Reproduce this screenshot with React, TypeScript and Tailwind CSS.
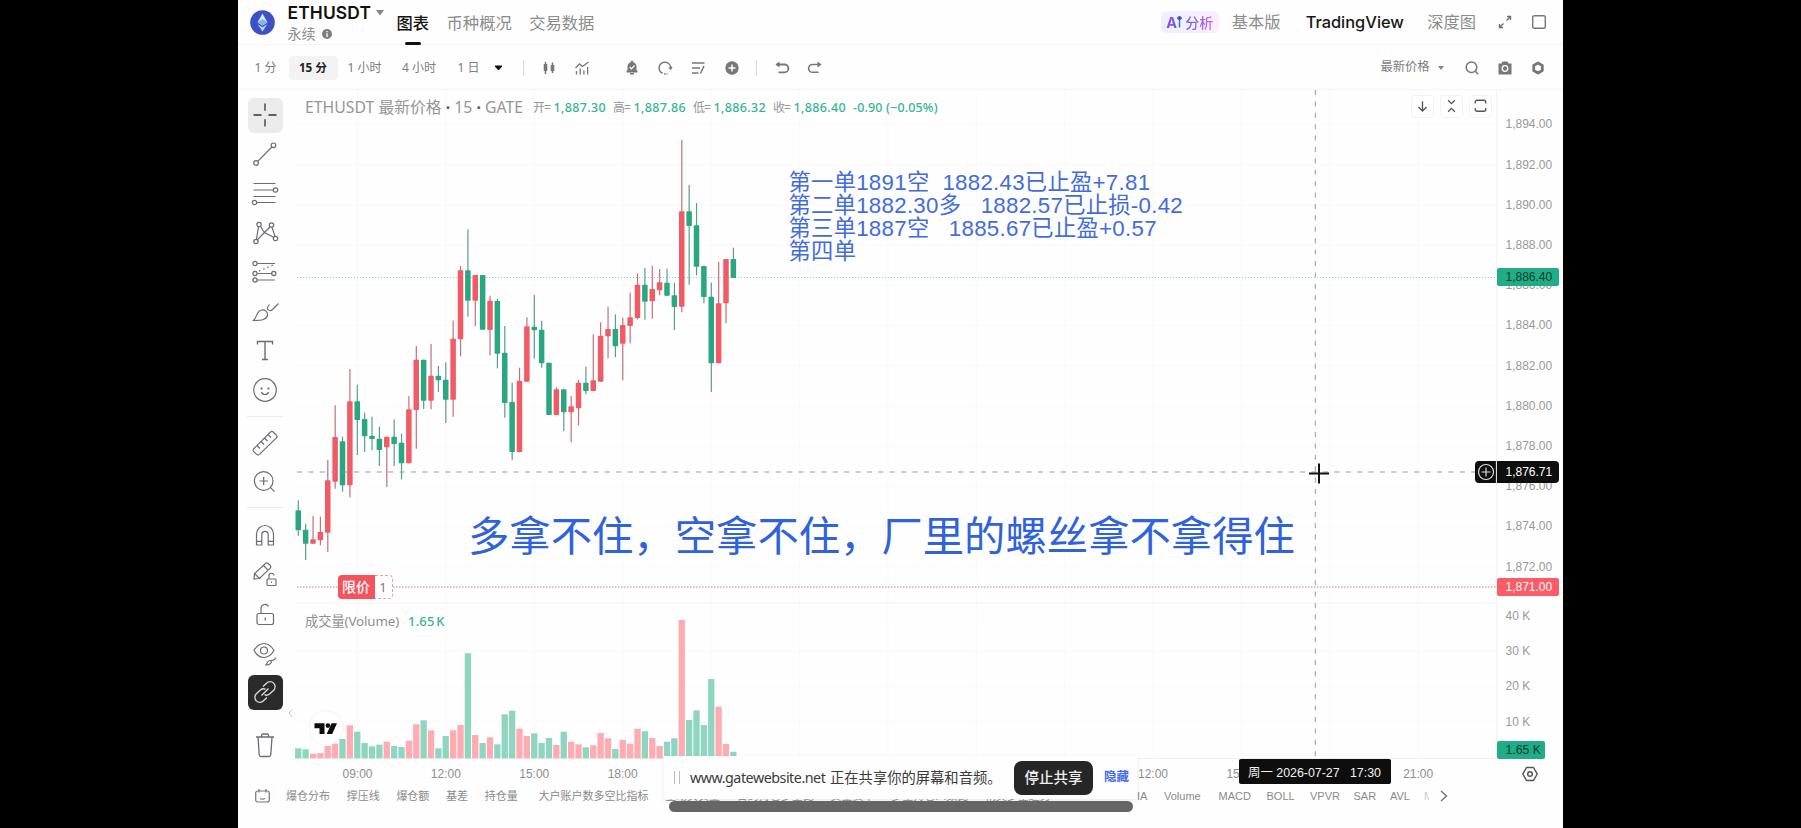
import React from 'react';

type Candle = ['g' | 'r', number, number, number, number, number];

// color, high, body top, body bottom, low, volume top
const candles: Candle[] = [
  ['g', 500.3, 510.3, 530.3, 535.7, 748.3],
  ['g', 523.7, 529.7, 543.7, 560, 749.3],
  ['r', 516, 539.3, 543.7, 543.7, 753.7],
  ['r', 516.7, 532, 540.3, 545.3, 753],
  ['r', 460, 480.3, 532.7, 552, 746],
  ['r', 405.3, 437, 481.7, 488.7, 743.7],
  ['g', 436.7, 441.3, 485.3, 491.7, 739],
  ['r', 369, 401.3, 485.3, 497.3, 725.3],
  ['g', 384.7, 401.3, 420, 455, 731.7],
  ['g', 412.7, 419, 436.3, 452, 743],
  ['g', 416.7, 435.7, 439, 450, 746.3],
  ['g', 426.7, 438.7, 450, 466, 744.7],
  ['r', 436.7, 436.7, 447.3, 487, 741.7],
  ['g', 419.3, 436.7, 444, 466, 746],
  ['g', 433.7, 442.7, 463.3, 479.3, 747],
  ['r', 396, 409.3, 463.3, 463.3, 740.7],
  ['r', 346, 359.7, 410, 448.7, 724.3],
  ['g', 359.7, 359.7, 400.7, 409, 720.3],
  ['r', 344, 375.7, 400.7, 409.3, 730.3],
  ['g', 366, 375.7, 380.3, 392, 748.3],
  ['g', 362.3, 379.7, 399.7, 423, 736],
  ['r', 320.7, 338.7, 399.7, 416.7, 730.3],
  ['r', 266, 270.3, 339.3, 356.3, 725],
  ['g', 229.3, 270.3, 300.7, 316.7, 653.3],
  ['r', 275, 275, 300.7, 326, 735],
  ['g', 275, 275, 329.7, 329.7, 743],
  ['r', 295.7, 300.7, 330, 355.3, 737.3],
  ['g', 298.7, 301, 353.7, 368.3, 744.3],
  ['g', 326, 352.7, 403, 417.7, 714.3],
  ['g', 382.7, 402, 452, 460, 710.7],
  ['r', 367.7, 380.7, 452, 452.3, 728.7],
  ['r', 317.3, 326.3, 381.7, 381.7, 736],
  ['g', 295, 326.7, 330.3, 358.7, 733.3],
  ['g', 320.7, 329.7, 363.3, 367.7, 743],
  ['g', 362.7, 362.7, 415, 415, 738],
  ['r', 387.3, 389.3, 415, 415, 745],
  ['g', 389.3, 389.3, 412.3, 431, 731.7],
  ['r', 396, 406.3, 412.3, 442.3, 741.7],
  ['r', 380, 382.7, 408.3, 425.3, 744.3],
  ['g', 366.7, 382.7, 391, 394.3, 747.3],
  ['r', 334.3, 380.3, 391, 391, 745.3],
  ['r', 322.3, 335.7, 381.7, 381.7, 733],
  ['r', 306.7, 329, 336.3, 358.3, 738.3],
  ['g', 314.3, 329, 346.3, 357.3, 749],
  ['r', 317.7, 325, 343.7, 380.3, 740],
  ['r', 292.7, 317.3, 326, 343.3, 743.7],
  ['r', 273.3, 284.7, 318, 319.3, 728.7],
  ['g', 268, 284.7, 301.7, 319.7, 731.3],
  ['r', 265.7, 289, 301.3, 318.7, 738],
  ['r', 269, 282.3, 290.3, 295.3, 746],
  ['g', 268.7, 282.7, 295.7, 295.7, 741.7],
  ['g', 282.7, 295.3, 307, 330, 738.3],
  ['r', 140, 211.3, 306.7, 312.3, 620],
  ['g', 185, 211.3, 226, 284.7, 720],
  ['g', 203, 225.3, 266.7, 275.3, 710.3],
  ['g', 265.7, 266, 297, 303.3, 725],
  ['g', 282.7, 296.7, 363.3, 392, 679],
  ['r', 262, 303.3, 363.3, 363.3, 706.7],
  ['r', 259, 259, 303.3, 323.3, 744],
  ['g', 247.7, 259, 278, 278, 751.7],
];

const prices = ['1,894.00', '1,892.00', '1,890.00', '1,888.00', '1,886.00', '1,884.00', '1,882.00', '1,880.00', '1,878.00', '1,876.00', '1,874.00', '1,872.00'];
const volumes = ['40 K', '30 K', '20 K', '10 K'];
// blank slots sit behind the share bar
const times = ['09:00', '12:00', '15:00', '18:00', '', '', '', '', '', '12:00', '15:00', '', '21:00'];

const Tool: React.FC<{ children: React.ReactNode; box?: string }> = ({ children, box = '' }) => (
  <div className="flex h-[39.3px] w-[54px] shrink-0 items-center justify-center">
    <div className={`flex h-[35px] w-[35px] items-center justify-center rounded-md text-[#6c6c72] ${box}`}>
      <svg width="30" height="30" viewBox="0 0 30 30" fill="none" stroke="currentColor" strokeWidth="1.2">
        {children}
      </svg>
    </div>
  </div>
);

const Icon: React.FC<{ children: React.ReactNode; className?: string }> = ({ children, className = '' }) => (
  <div className={`flex w-[33.3px] shrink-0 items-center justify-center text-[#777] ${className}`}>
    <svg width="18" height="18" viewBox="0 0 18 18" fill="none" stroke="currentColor" strokeWidth="1.5">
      {children}
    </svg>
  </div>
);

const Header = () => (
  <header className="flex h-[45px] items-center border-b border-[#f3f3f3] text-[16.3px] text-[#8c8c8c]">
    <svg className="ml-3 shrink-0" width="25" height="25" viewBox="0 0 25 25">
      <circle cx="12.5" cy="12.5" r="12.3" fill="#3f4fc6" />
      <path d="M12.500 3.500 7.500 12.400l5 3 5-3z" fill="#d3ecfb" />
      <path d="M12.500 9 7.500 12.400l5 3 5-3z" fill="#86b4ee" />
      <path d="m7.800 14.200 4.700 7.300 4.700-7.300-4.700 3z" fill="#b5dcf8" />
    </svg>
    <div className="ml-[12.500px] w-[109px] shrink-0 pt-[3px]">
      <div className="flex h-[20px] items-center font-['Inter'] text-[17.400px] font-semibold leading-5 text-[#111]">
        <span className="tracking-[0.150px]">ETHUSDT</span>
        <svg className="ml-[5px]" width="8" height="6" viewBox="0 0 8 6"><path d="M0 0h8L4 5.5z" fill="#858585" /></svg>
      </div>
      <div className="flex h-[21px] items-center text-[14px] leading-[21px]">
        永续
        <svg className="ml-[6px]" width="10" height="10" viewBox="0 0 10 10">
          <circle cx="5" cy="5" r="5" fill="#7d7d7d" />
          <path d="M5 2v1.2M5 4.2V8" stroke="#fff" strokeWidth="1.3" />
        </svg>
      </div>
    </div>
    <nav className="flex h-full items-stretch gap-[17.5px] leading-[46px] whitespace-nowrap">
      <div className="relative font-medium text-[#151515]">
        图表
        <div className="absolute bottom-[-1px] left-2 h-[3px] w-4 rounded-sm bg-[#111]" />
      </div>
      <div>币种概况</div>
      <div>交易数据</div>
    </nav>
    <div className="ml-auto flex items-center pt-[1px] whitespace-nowrap">
      <div className="mr-[13px] flex h-[22px] w-[58px] items-center justify-center rounded-md bg-gradient-to-r from-[#eef0ff] to-[#fbeefd]">
        <span className="bg-gradient-to-r from-[#a03fe0] to-[#5864e8] bg-clip-text font-['Inter'] text-[14.500px] font-bold text-transparent">A</span>
        <svg className="mr-[3px]" width="5" height="12" viewBox="0 0 5 12"><path d="M2.500 4.500V11.500M2.500 .3l1.800 1.800-1.800 1.800L.7 2.100z" stroke="#4867e8" strokeWidth="1.500" /></svg>
        <span className="bg-gradient-to-r from-[#6a60e6] to-[#c167df] bg-clip-text text-[14px] font-medium text-transparent">分析</span>
      </div>
      <span>基本版</span>
      <span className="ml-[25px] w-[96.500px] font-['Inter'] text-[16.400px] font-medium text-[#161616]">TradingView</span>
      <span className="ml-[25px]">深度图</span>
      <svg className="ml-[22px]" width="14" height="14" viewBox="0 0 14 14" fill="none" stroke="#707070" strokeWidth="1.400">
        <path d="M9 1.500h3.500V5M12.500 1.500 8.500 5.500M5 12.500H1.500V9M1.500 12.500l4-4" />
      </svg>
      <svg className="mr-[17px] ml-[20px]" width="14" height="14" viewBox="0 0 14 14" fill="none" stroke="#777" strokeWidth="1.400">
        <rect x="0.700" y="0.700" width="12.600" height="12.600" rx="1.500" />
      </svg>
    </div>
  </header>
);

const Toolbar = () => (
  <div className="flex h-[45px] items-center border-b border-[#f5f5f5] pt-[1px] text-[12px] whitespace-nowrap text-[#7d7d7d]">
    <div className="ml-[7.500px] w-[40px] text-center">1 分</div>
    <div className="ml-[3px] flex h-6 w-[49px] items-center justify-center rounded bg-[#f3f3f3] text-[11.700px] font-bold text-[#222]">15 分</div>
    <div className="w-[54px] text-center">1 小时</div>
    <div className="w-[55px] text-center">4 小时</div>
    <div className="w-[44px] text-center">1 日</div>
    <svg className="ml-[3.500px] shrink-0" width="9" height="6" viewBox="0 0 9 6"><path d="M1 1h7L4.500 5z" fill="#111" stroke="#111" strokeLinejoin="round" /></svg>
    <div className="ml-[20px] h-4 w-px bg-[#ddd]" />
    <Icon className="ml-[8.500px]">
      <path d="M5.500 3v12M12.500 3.500v10.500" />
      <rect x="3.700" y="5" width="3.600" height="7" fill="currentColor" stroke="none" />
      <rect x="10.700" y="6" width="3.600" height="6" fill="currentColor" stroke="none" />
    </Icon>
    <Icon className="mr-[16px]">
      <path d="m2.500 9 4-4 3 2.500L15.500 3M3.500 12v3.500M7.200 9.500v6M10.900 11.500v4M14.600 8v7.500" strokeWidth="1.300" />
    </Icon>
    <Icon>
      <path d="M3.500 13.500V12l1-1V7.500a4.500 4.500 0 0 1 9 0V11l1 1v1.500zM7 15.500h4V14H7z" fill="currentColor" stroke="none" />
      <path d="M8 2.500h2" />
      <path d="m6.700 8 1.700 1.800L11.500 6.500" stroke="#fff" strokeWidth="1.200" />
    </Icon>
    <Icon>
      <path d="M6.500 14.300A5.800 5.800 0 1 1 14.700 9" />
      <path d="m12.800 8.300 2 2 1.200-2.500" strokeWidth="1.200" />
      <path d="M8 14.900h3.500" strokeDasharray="1.500 1" />
    </Icon>
    <Icon>
      <path d="M3 4h12.500M3 9h8M3 14h6.500M15 7l-3.500 7.500" />
    </Icon>
    <Icon>
      <circle cx="9" cy="9" r="6.700" fill="currentColor" stroke="none" />
      <path d="M9 5.500v7M5.500 9h7" stroke="#fff" />
    </Icon>
    <div className="mx-[8px] h-4 w-px bg-[#ddd]" />
    <Icon className="text-[#222]">
      <path d="M3.500 5.500h8a3.700 3.700 0 0 1 0 7.800H5.500" strokeWidth="1.800" />
      <path d="M6.500 2.500v6L2.500 5.500z" fill="currentColor" stroke="none" />
    </Icon>
    <Icon>
      <path d="M14.500 5.500h-8a3.700 3.700 0 0 0 0 7.800h6" strokeWidth="1.600" />
      <path d="M11.500 2.500v6l4-3z" fill="currentColor" stroke="none" />
    </Icon>
    <div className="ml-auto flex items-center">
      <span className="text-[12.300px]">最新价格</span>
      <svg className="mr-[11.500px] ml-[8px]" width="6" height="4" viewBox="0 0 6 4"><path d="M0 0h6L3 4z" fill="#888" /></svg>
      <Icon>
        <circle cx="8.500" cy="8.300" r="5.300" />
        <path d="m12.300 12.300 3 3" />
      </Icon>
      <Icon>
        <path d="M2.500 4.500h3l1-2h5l1 2h3v11h-13z" fill="currentColor" stroke="none" />
        <circle cx="9" cy="9.500" r="2.800" stroke="#fff" strokeWidth="1.300" />
      </Icon>
      <Icon className="mr-[8px]">
        <path d="m9 4 4.300 2.500v5L9 14l-4.300-2.500v-5z" strokeWidth="2.800" strokeLinejoin="round" />
      </Icon>
    </div>
  </div>
);

const DrawingTools = () => (
  <aside className="flex w-[57px] shrink-0 flex-col pt-[5.500px]">
    <Tool box="bg-[#ebebeb]">
      <path d="M15 3.500v7.200M15 19.300v7.200M3.500 15h8M18.500 15h8" stroke="#333" strokeWidth="1.300" />
    </Tool>
    <Tool>
      <circle cx="23.500" cy="6.300" r="2.300" />
      <circle cx="6" cy="24" r="2.300" />
      <path d="M7.700 22.300 21.900 8" />
    </Tool>
    <Tool>
      <path d="M3.500 4.500h22M3.500 11h20M3.500 17.500h22M6.500 23.500h19" />
      <circle cx="25.500" cy="11" r="2.200" />
      <circle cx="4.500" cy="23.500" r="2.200" />
    </Tool>
    <Tool>
      <circle cx="9" cy="6.500" r="2.200" />
      <circle cx="21.500" cy="7" r="2.200" />
      <circle cx="6" cy="23.500" r="2.200" />
      <circle cx="25.500" cy="20.500" r="2.200" />
      <path d="M6.500 21.300 8.500 8.700M10.400 8.200l4 6.300 9.300 4.700M25 18.400 22 9.100M20.200 8.800l-5.800 5.700-6.800 7.200" />
    </Tool>
    <Tool>
      <path d="M7.200 6.500H25M7.500 16.500h14.500M7.200 23H25" />
      <path d="m9 14 14-6" strokeDasharray="1.500 3" />
      <circle cx="5" cy="6.500" r="2.100" />
      <circle cx="5" cy="16.500" r="2.100" />
      <circle cx="23.800" cy="16.500" r="2.100" />
      <circle cx="5" cy="23" r="2.100" />
    </Tool>
    <Tool>
      <path d="M3.500 23.500c3.500-3 3-9.500 8-10.500 3.500-.8 6.500 2 6 5.200-.8 4.500-5.500 5.300-14 5.300z" />
      <path d="M18 9.500c-2 2.500 1.500 5.500 4.500 3L28.500 6.500M18 9.500l1.500-2" />
    </Tool>
    <Tool>
      <path d="M7.500 8.500V5.500h15v3M15 5.500v18M12 23.500h6" strokeWidth="1.400" />
    </Tool>
    <Tool>
      <circle cx="15" cy="15" r="11.300" />
      <path d="M11.500 17c.8 3.300 6.200 3.300 7 0" />
      <path d="M11.500 12.500v2M18.500 12.500v2" strokeWidth="1.800" />
    </Tool>
    <div className="mt-[6px] mb-[6px] ml-[9px] h-px w-[36px] shrink-0 bg-[#ececec]" />
    <Tool>
      <path d="m3.500 21 17-17a2 2 0 0 1 2.700 0l3.200 3.200a2 2 0 0 1 0 2.700l-17 16.500a2 2 0 0 1-2.700 0l-3.200-3a2 2 0 0 1 0-2.400zM7 17.500l3 3M11 13.500l3 3M14.500 10l3 3M18 6.500l3 3" />
    </Tool>
    <Tool>
      <circle cx="13.700" cy="14" r="9.300" />
      <path d="m20.500 20.700 4 4M9.500 14h8.400M13.700 9.800v8.400" />
    </Tool>
    <div className="mt-[6px] mb-[7px] ml-[9px] h-px w-[36px] shrink-0 bg-[#ececec]" />
    <Tool>
      <path d="M6.500 25V14a8.500 8.500 0 0 1 17 0v11h-5.300V14.500a3.200 3.200 0 0 0-6.400 0V25zM6.500 21.300h5.300M18.200 21.300h5.300" />
    </Tool>
    <Tool>
      <path d="m4 20 .5-5.500L15.500 4.500a2 2 0 0 1 2.700 0l2 2a2 2 0 0 1 0 2.700L9.500 19.500zM13.500 6.500l4.500 4.700M4.500 14.500l5 5" />
      <rect x="17" y="20" width="9" height="6.500" rx="1" />
      <path d="M19 20v-3a2.500 2.500 0 0 1 5-.5M21.500 22.500v1.500" />
    </Tool>
    <Tool>
      <rect x="7" y="14.500" width="16.500" height="11" rx="2" />
      <path d="M11 14.500V9a4 4 0 0 1 7.500-1.500M15.200 18.500v3" />
    </Tool>
    <Tool>
      <path d="M4 12.500C7 7.500 10.500 5.500 14 5.500s7 2 10 7c-3 5-6.500 7-10 7s-7-2-10-7z" />
      <circle cx="14" cy="12.500" r="3.500" />
      <path d="M15.500 27c2-1 2-4.500 4.500-4.500S22 27 15.500 27zM21.500 22c1 1 2.500 0 4.500-2" />
    </Tool>
    <Tool box="bg-[#2b2b2b] !text-[#ddd]">
      <path d="m13 9.500 3.500-3.300a5 5 0 0 1 7.200 7L19.500 17a4.500 4.500 0 0 1-5 .7M17 20.500l-3.500 3.300a5 5 0 0 1-7.200-7L10.500 13a4.500 4.500 0 0 1 5-.7M11.500 18.500l7-7" strokeWidth="1.300" />
    </Tool>
    <div className="h-[14px] shrink-0" />
    <Tool>
      <path d="M6 6h18M8 6l1.200 17.700a2 2 0 0 0 2 1.800h7.600a2 2 0 0 0 2-1.800L22 6M11.500 6V4.500a1.500 1.500 0 0 1 1.500-1.500h4A1.500 1.500 0 0 1 18.500 4.500V6" strokeWidth="1.300" />
    </Tool>
  </aside>
);

const Chart = () => (
  <svg className="block" width="1202" height="669" viewBox="295 90 1202 669">
    {prices.map((p, i) => (
      <path key={p} d={`M296 ${124.5 + i * 40.2}H1497`} stroke="#fafafa" />
    ))}
    {volumes.map((v, i) => (
      <path key={v} d={`M296 ${616 + i * 35.3}H1497`} stroke="#fafafa" />
    ))}
    {times.map((t, i) => (
      <path key={i} d={`M${357.5 + i * 88.4} 90V758`} stroke="#f9f9f9" />
    ))}
    <path d="M296 603H1497M1496.500 90V758" stroke="#f3f3f3" />
    <path d="M296 758.500H1497" stroke="#f0f0f0" />
    {candles.map(([c, , , , , v], i) => (
      <rect key={i} x={295.1 + i * 7.375} y={v} width="6.300" height={758.3 - v} fill={c === 'g' ? '#8fd5c0' : '#ffabb2'} />
    ))}
    <path d="M297 277.500H1497" stroke="#8fd6c4" strokeDasharray="1 2" />
    <path d="M297 587H1497" stroke="#cf7d86" strokeDasharray="1.500 1.500" />
    {candles.map(([c, high, top, bottom, low], i) => (
      <g key={i}>
        <rect x={297.7 + i * 7.375} y={high} width="1.200" height={low - high} fill={c === 'g' ? '#55a08a' : '#c56f7a'} />
        <rect x={295.5 + i * 7.375} y={top} width="5.500" height={bottom - top} rx="0.800" fill={c === 'g' ? '#2aa780' : '#f05b66'} />
      </g>
    ))}
    <path d="M297 472H1497M1315.300 90V758" stroke="#999" strokeDasharray="5 6.400" />
    <path d="M1309 473.500h20M1319 463.500v20" stroke="#111" strokeWidth="2" />
    <circle cx="326" cy="728" r="17" fill="#fff" stroke="#f3f3f3" />
    <path d="M314.500 723.300h10v10.800h-5v-5.800h-5zM331.500 723.300h5.500l-4.800 10.800h-5.500z" fill="#0c0c0c" />
    <circle cx="327.900" cy="725.600" r="2.300" fill="#0c0c0c" />
  </svg>
);

const Quote = ({ name, value }: { name: string; value: string }) => (
  <span className="flex w-[80px] items-center">
    <span className="w-[20.500px] tracking-[-1px]">{name}=</span>
    <span className="font-['Noto_Sans'] text-[12.500px] font-medium tracking-[0.350px] text-[#35b495]">{value}</span>
  </span>
);

const Overlays = () => (
  <>
    <div className="absolute top-[8px] left-[10px] flex h-[20px] items-center text-[12px] whitespace-nowrap text-[#969696]">
      <span className="w-[228px] text-[15.800px]">ETHUSDT 最新价格 <b className="text-[#555]">·</b> 15 <b className="text-[#555]">·</b> GATE</span>
      <Quote name="开" value="1,887.30" />
      <Quote name="高" value="1,887.86" />
      <Quote name="低" value="1,886.32" />
      <Quote name="收" value="1,886.40" />
      <span className="font-['Noto_Sans'] text-[12.500px] font-medium tracking-[0.150px] text-[#35b495]">-0.90 (−0.05%)</span>
    </div>

    <div className="absolute top-[4.500px] left-[1115.500px] flex gap-[6px]">
      {['M11 6v10M6.800 12l4.200 4.200 4.200-4.200', 'M7.500 5l3.500 3.500L14.500 5M7.500 17l3.500-3.500 3.500 3.500', 'M5.500 8.500V7a2 2 0 0 1 2-2h7a2 2 0 0 1 2 2v1.500M16.500 13v1.500a2 2 0 0 1-2 2h-7a2 2 0 0 1-2-2V13'].map((d) => (
        <div key={d} className="flex h-[23px] w-[23px] items-center justify-center rounded border border-[#f3f3f3] bg-white">
          <svg width="22" height="22" viewBox="0 0 22 22" fill="none" stroke="#555" strokeWidth="1.400"><path d={d} /></svg>
        </div>
      ))}
    </div>

    {/* Trade notes */}
    <div className="absolute top-[82px] left-[493.500px] font-['Liberation_Sans','Noto_Sans_CJK_SC',sans-serif] text-[22.300px] leading-[22.900px] tracking-[0.270px] whitespace-pre text-[#426cdc]">
      <div>第一单1891空  1882.43已止盈+7.81</div>
      <div>第二单1882.30多   1882.57已止损-0.42</div>
      <div>第三单1887空   1885.67已止盈+0.57</div>
      <div>第四单</div>
    </div>
    <div className="absolute top-[416px] left-[173px] text-[41.350px] leading-[58px] whitespace-nowrap text-[#2f62dc]">
      多拿不住，空拿不住，厂里的螺丝拿不拿得住
    </div>

    {/* Limit order tag */}
    <div className="absolute top-[484.500px] left-[42.500px] flex h-[24.500px] text-[14px] leading-[24px]">
      <div className="w-[37px] rounded-l-sm bg-[#f5535e] text-center font-medium text-white">限价</div>
      <div className="w-[18px] rounded-r-sm border border-l-0 border-dashed border-[#d9a5aa] bg-white text-center text-[13px] leading-[22px] text-[#8d7377]">1</div>
    </div>

    <div className="absolute top-[521px] left-[10px] flex h-[22px] items-center text-[13.300px] whitespace-nowrap text-[#8e8e8e]">
      <span className="w-[103px] tracking-[-0.100px]">成交量(Volume)</span>
      <span className="font-['Noto_Sans'] text-[13px] font-medium tracking-[0.200px] text-[#35b495] [word-spacing:-2px]">1.65 K</span>
    </div>
    <div className="absolute top-[613px] left-[-10px] flex h-5 w-2.5 items-center justify-center text-[#bbb]">
      <svg width="5" height="8" viewBox="0 0 5 8" fill="none" stroke="currentColor"><path d="M4 .5 1 4l3 3.500" /></svg>
    </div>
  </>
);

const PriceAxis = () => (
  <div className="relative w-[66px] shrink-0 pt-[14.400px] font-['Liberation_Sans',sans-serif] text-[12px] text-[#999]">
    {prices.map((p) => (
      <div key={p} className="flex h-[40.200px] items-center pl-[8.500px]">{p}</div>
    ))}
    <div className="h-[11.500px]" />
    {volumes.map((v) => (
      <div key={v} className="flex h-[35.300px] items-center pl-[8.500px]">{v}</div>
    ))}
    <div className="absolute top-[178px] left-0 flex h-[18px] w-[62px] items-center rounded-xs bg-[#1fad87] pl-[8.500px] text-[#0b3d30]">1,886.40</div>
    <div className="absolute top-[371px] left-[-22px] flex h-[22px] w-[84px] items-center rounded-sm bg-[#0e0e0e] text-white">
      <svg width="22" height="22" viewBox="0 0 22 22" fill="none" stroke="#ddd" strokeWidth="1.200">
        <circle cx="11" cy="11" r="7.500" />
        <path d="M11 6.500v9M6.500 11h9M21.500 0v22" />
      </svg>
      <span className="ml-[8.500px]">1,876.71</span>
    </div>
    <div className="absolute top-[488px] left-0 flex h-[18px] w-[62px] items-center rounded-xs bg-[#fb5c66] pl-[8.500px] text-white">1,871.00</div>
    <div className="absolute top-[651px] left-0 flex h-[18px] w-[48px] items-center rounded-xs bg-[#1fad87] pl-[8.500px] text-[12.300px] text-[#0b3d30]">1.65 K</div>
  </div>
);

const TimeAxis = () => (
  <div className="relative flex h-[26px] shrink-0 items-center pt-[3px] pl-[75.300px] font-['Liberation_Sans','Noto_Sans_CJK_SC',sans-serif] text-[12px] text-[#8e8e8e]">
    {times.map((t, i) => (
      <div key={i} className="w-[88.400px] shrink-0 text-center">{t}</div>
    ))}
    <svg className="ml-[60px] shrink-0" width="16" height="16" viewBox="0 0 16 16" fill="none" stroke="#555" strokeWidth="1.500">
      <path d="M4.500 1.500h7L15.200 8l-3.700 6.500h-7L.8 8z" strokeLinejoin="round" />
      <circle cx="8" cy="8" r="2.300" />
    </svg>
    <div className="absolute top-[-0.500px] left-[1000.500px] flex h-[25px] w-[152px] items-center justify-center rounded-xs bg-[#0e0e0e] pt-[5px] text-[12.400px] whitespace-pre text-[#f2f2f2]">
      周一 2026-07-27   17:30
    </div>
  </div>
);

const Indicators = () => (
  <div className="flex h-[22px] shrink-0 items-center text-[11px] whitespace-nowrap text-[#8a8a8a]">
    <svg className="ml-[17px] shrink-0" width="15" height="14" viewBox="0 0 15 14" fill="none" stroke="#777" strokeWidth="1.200">
      <rect x="0.700" y="2" width="13.600" height="11" rx="2" />
      <path d="M4 0v3.500M11 0v3.500M5 9.500c1.500.8 3.500.8 5 0" />
    </svg>
    <div className="ml-[16px] flex w-[851px] gap-[16.700px] overflow-hidden">
      <span>爆仓分布</span>
      <span>撑压线</span>
      <span>爆仓额</span>
      <span>基差</span>
      <span>持仓量</span>
      <span className="ml-[4px]">大户账户数多空比指标</span>
      <span>主动买卖量</span>
      <span>合约持仓多空比</span>
      <span>资金费率</span>
      <span>多空持仓人数比</span>
      <span>精英多空趋势</span>
    </div>
    <div className="flex items-center font-['Liberation_Sans',sans-serif]">
      <span className="w-[27px]">IA</span>
      <span className="w-[54.500px]">Volume</span>
      <span className="w-[48px]">MACD</span>
      <span className="w-[43.500px]">BOLL</span>
      <span className="w-[43.500px]">VPVR</span>
      <span className="w-[36.500px]">SAR</span>
      <span className="w-[34px]">AVL</span>
      <span className="w-[5px] overflow-hidden text-[#ccc]">M</span>
    </div>
    <svg className="ml-[11px] shrink-0" width="8" height="12" viewBox="0 0 8 12" fill="none" stroke="#777" strokeWidth="1.500"><path d="m1 1 5.500 5L1 11" /></svg>
  </div>
);

const ShareBar = () => (
  <div className="absolute top-[756px] left-[426px] flex h-[43px] w-[473px] items-center bg-[#fefefe] whitespace-nowrap shadow-[0_2px_5px_rgba(0,0,0,0.08)]">
    <div className="ml-[10px] h-[13px] w-[6px] border-x border-[#bbb]" />
    <span className="ml-[10px] flex w-[324px] gap-[4px] font-['Noto_Sans','Noto_Sans_CJK_SC',sans-serif] text-[14.300px] text-[#3a3a3a]">
      <span className="w-[136px] tracking-[-0.480px]">www.gatewebsite.net</span>
      <span>正在共享你的屏幕和音频。</span>
    </span>
    <button className="h-[34px] w-[79px] rounded-lg bg-[#262626] text-[14.500px] font-medium text-[#f0f0f0]">停止共享</button>
    <span className="ml-[11px] text-[12.500px] font-bold text-[#4468ee]">隐藏</span>
  </div>
);

const App: React.FC = () => {
  return (
    <div className="flex h-[828px] w-[1801px] overflow-hidden bg-black pl-[238px] font-['Noto_Sans','Noto_Sans_CJK_SC',sans-serif]">
      <div className="relative flex w-[1325px] flex-col bg-[#fefefe]">
        <Header />
        <Toolbar />
        <div className="flex h-[669px] shrink-0">
          <DrawingTools />
          <div className="relative w-[1202px] shrink-0">
            <Chart />
            <Overlays />
          </div>
          <PriceAxis />
        </div>
        <TimeAxis />
        <Indicators />
        <ShareBar />
        {/* Home indicator */}
        <div className="absolute top-[801px] left-[431px] h-[10.500px] w-[464px] rounded-full bg-[#666]" />
      </div>
    </div>
  );
};

export default App;
